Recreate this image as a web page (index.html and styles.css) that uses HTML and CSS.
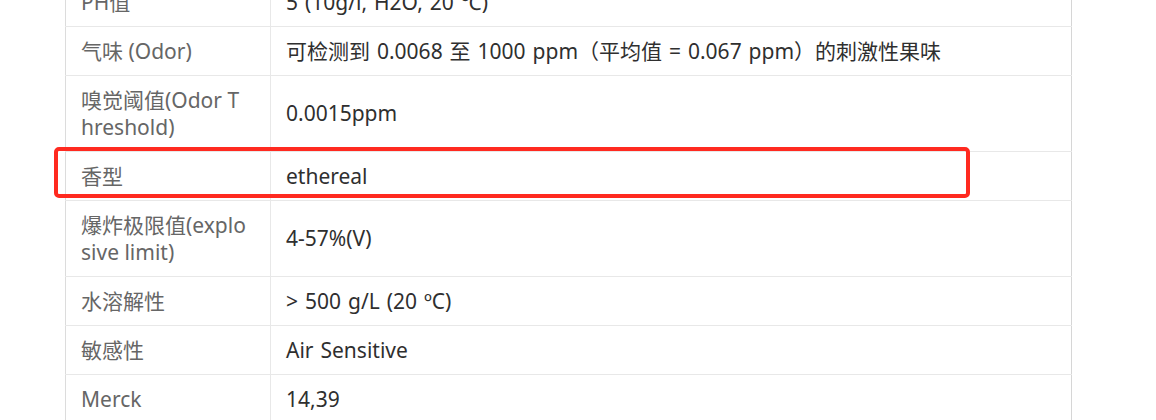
FILE: index.html
```html
<!DOCTYPE html>
<html lang="zh">
<head>
<meta charset="utf-8">
<link rel="stylesheet" href="styles.css">
</head>
<body>
<div class="page">
  <table class="props">
    <tr><td class="k">PH值</td><td class="v">5 (10g/l, H2O, 20 ℃)</td></tr>
    <tr><td class="k">气味 (Odor)</td><td class="v">可检测到 0.0068 至 1000 ppm（平均值 = 0.067 ppm）的刺激性果味</td></tr>
    <tr><td class="k">嗅觉阈值(Odor Threshold)</td><td class="v">0.0015ppm</td></tr>
    <tr><td class="k">香型</td><td class="v">ethereal</td></tr>
    <tr><td class="k">爆炸极限值(explosive limit)</td><td class="v">4-57%(V)</td></tr>
    <tr><td class="k">水溶解性</td><td class="v">&gt; 500 g/L (20 ºC)</td></tr>
    <tr><td class="k">敏感性</td><td class="v">Air Sensitive</td></tr>
    <tr><td class="k">Merck</td><td class="v">14,39</td></tr>
  </table>
  <div class="highlight"></div>
</div>
</body>
</html>
```
FILE: styles.css
```css
html, body {
  margin: 0;
  padding: 0;
  background: #fff;
  overflow: hidden;
}
.page {
  position: relative;
  width: 1156px;
  height: 420px;
  overflow: hidden;
  font-family: "Noto Sans", "Noto Sans CJK SC", sans-serif;
  font-size: 21px;
}
.props {
  border-collapse: collapse;
  margin: -23px 0 0 65px;
  width: 1007px;
  table-layout: fixed;
}
.props td {
  border: 1px solid #e8e8e8;
  padding: 10.5px 15px;
  line-height: 27px;
  vertical-align: middle;
  word-break: break-all;
}
.props tr td:first-child { border-left-color: #dcdcdc; }
.props tr td:last-child { border-right-color: #d6d6d6; }
.props td.k {
  width: 166px;
  padding-right: 23px;
  color: #666;
}
.props td.v {
  color: #2f2f2f;
  word-spacing: 1.5px;
}
.highlight {
  position: absolute;
  left: 54px;
  top: 147px;
  width: 908px;
  height: 43px;
  border: 4px solid #ff2a20;
  border-radius: 5px;
}
```
